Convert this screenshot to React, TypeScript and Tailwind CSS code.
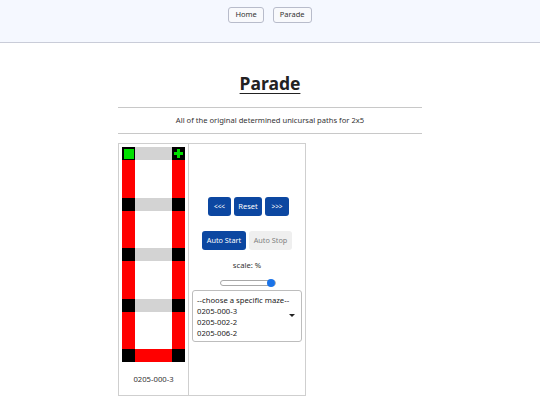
import React from 'react';

const font = { fontFamily: '"Noto Sans", "Open Sans", sans-serif' };

// 2x5 node grid; path runs down the left, across the bottom, up the right
function Node({ kind }: { kind?: 'start' | 'end' }) {
  return (
    <div className="w-[13px] h-[13px] bg-black flex items-center justify-center shrink-0">
      {kind === 'start' && <div className="w-[10px] h-[10px] bg-[#00e000]" />}
      {kind === 'end' && (
        <svg width="11" height="11" viewBox="0 0 11 11">
          <rect x="4" y="1" width="3" height="9" fill="#00e000" />
          <rect x="1" y="4" width="9" height="3" fill="#00e000" />
        </svg>
      )}
    </div>
  );
}

function Maze() {
  const rows = [0, 1, 2, 3, 4];
  return (
    <div className="flex flex-col w-[63px]">
      {rows.map((r) => (
        <React.Fragment key={r}>
          <div className="flex">
            <Node kind={r === 0 ? 'start' : undefined} />
            <div className={`w-[37px] h-[13px] ${r === 4 ? 'bg-[#ff0000]' : 'bg-[#d3d3d3]'}`} />
            <Node kind={r === 0 ? 'end' : undefined} />
          </div>
          {r < 4 && (
            <div className="flex h-[37.5px]">
              <div className="w-[13px] bg-[#ff0000]" />
              <div className="w-[37px] bg-white" />
              <div className="w-[13px] bg-[#ff0000]" />
            </div>
          )}
        </React.Fragment>
      ))}
    </div>
  );
}

export default function App() {
  return (
    <div className="min-h-[405px] bg-white text-[#222]" style={font}>
      <header className="h-[43px] bg-[#f5f8ff] border-b border-[#c9ccd8] flex justify-center gap-[9px] pt-[7px]">
        <button className="h-[16px] px-[6px] text-[7.5px] leading-none text-[#333] bg-[#f8f9fc] border border-[#b8bccb] rounded-[3px]">
          Home
        </button>
        <button className="h-[16px] px-[6px] text-[7.5px] leading-none text-[#333] bg-[#f8f9fc] border border-[#b8bccb] rounded-[3px]">
          Parade
        </button>
      </header>

      <main className="flex flex-col items-center">
        <h1 className="mt-[28px] text-[17.5px] leading-[24px] font-bold underline underline-offset-[3px] text-[#222]">
          Parade
        </h1>
        <div className="mt-[12px] w-[304px] border-t border-b border-[#c8c8c8] py-[7px] text-center text-[7.6px] leading-[11px] text-[#333]">
          All of the original determined unicursal paths for 2x5
        </div>

        <table className="mt-[9px] border border-[#cfcfcf] border-collapse self-start ml-[118px]">
          <tbody>
            <tr>
              <td className="border border-[#cfcfcf] w-[70px] align-top p-0">
                <div className="pt-[3px] pl-[3px]">
                  <Maze />
                </div>
                <div className="text-center text-[7.7px] leading-[11px] text-[#333] mt-[12px] mb-[10px]">
                  0205-000-3
                </div>
              </td>
              <td className="border border-[#cfcfcf] w-[117px] align-middle p-0">
                <div className="flex flex-col items-center">
                  <div className="flex gap-[3px] ml-[3px]">
                    <button className="h-[19px] w-[23px] rounded-[3px] bg-[#0c47a1] text-white text-[6.5px]">&lt;&lt;&lt;</button>
                    <button className="h-[19px] w-[28px] rounded-[3px] bg-[#0c47a1] text-white text-[7.5px]">Reset</button>
                    <button className="h-[19px] w-[24px] rounded-[3px] bg-[#0c47a1] text-white text-[6.5px]">&gt;&gt;&gt;</button>
                  </div>
                  <div className="flex gap-[3px] mt-[15px]">
                    <button className="h-[19px] w-[44px] rounded-[3px] bg-[#0c47a1] text-white text-[7.3px]">Auto Start</button>
                    <button className="h-[19px] w-[43px] rounded-[3px] bg-[#efefef] text-[#808080] text-[7.3px]">Auto Stop</button>
                  </div>
                  <div className="mt-[10px] text-[7.7px] leading-[11px] text-[#333]">scale: %</div>
                  <div className="mt-[8px] relative w-[56px] h-[8px] ml-[2px]">
                    <div className="absolute inset-x-0 top-[1px] h-[6px] rounded-full border border-[#a8a8a8] bg-white" />
                    <div className="absolute right-[1px] top-0 w-[8px] h-[8px] rounded-full bg-[#1a73e8]" />
                  </div>
                  <div className="mt-[3px] relative w-[110px] h-[52px] border border-[#bdbdbd] rounded-[3px] overflow-hidden bg-white">
                    <div className="pl-[4px] pt-[4px] text-[7.7px] leading-[11px] text-[#222]">
                      <div>--choose a specific maze--</div>
                      <div>0205-000-3</div>
                      <div>0205-002-2</div>
                      <div>0205-006-2</div>
                      <div>0205-014-2</div>
                    </div>
                    <svg className="absolute right-[6px] top-[23px]" width="6" height="4" viewBox="0 0 6 4">
                      <path d="M0 0 L6 0 L3 3 Z" fill="#222" />
                    </svg>
                  </div>
                </div>
              </td>
            </tr>
          </tbody>
        </table>
      </main>
    </div>
  );
}
